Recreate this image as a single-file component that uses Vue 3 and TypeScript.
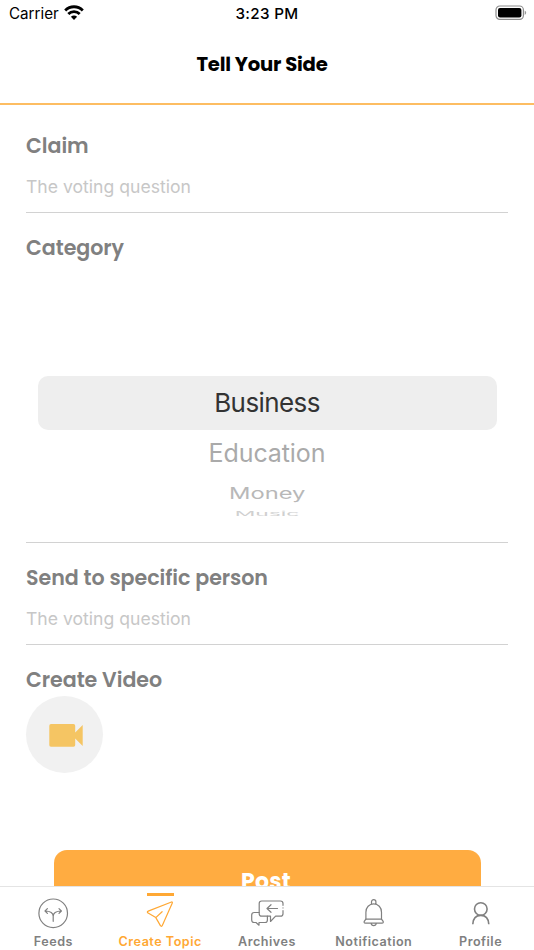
<script setup lang="ts">
interface Tab { label: string; icon: string; active?: boolean }
const tabs: Tab[] = [
  { label: 'Feeds', icon: 'feeds' },
  { label: 'Create Topic', icon: 'create', active: true },
  { label: 'Archives', icon: 'archives' },
  { label: 'Notification', icon: 'bell' },
  { label: 'Profile', icon: 'profile' },
]
</script>

<template>
  <div class="screen">
    <div class="status">
      <div class="carrier">
        <span>Carrier</span>
        <svg width="20" height="15" viewBox="0 0 20 15" fill="none" stroke="#000" stroke-width="2.8">
          <path d="M1.2 5.4C6.2.5 13.8.5 18.8 5.4M4.3 9c3.2-3.2 8.2-3.2 11.4 0" />
          <path d="M10 15 6.9 11.8c1.8-1.6 4.4-1.6 6.2 0Z" fill="#000" stroke="none" />
        </svg>
      </div>
      <span class="time">3:23 PM</span>
      <svg class="battery" width="32" height="16" viewBox="0 0 32 16">
        <rect x="1" y="1" width="27.4" height="13.4" rx="3.8" fill="none" stroke="#8d8d8d" stroke-width="1.2" />
        <rect x="3" y="3" width="23.4" height="9.4" rx="2" />
        <path d="M29.7 5.5c2 .8 2 3.6 0 4.4Z" fill="#999" />
      </svg>
    </div>
    <header><h1>Tell Your Side</h1></header>
    <main>
      <section class="field">
        <h2>Claim</h2>
        <p>The voting question</p>
      </section>
      <section class="category">
        <h2>Category</h2>
        <div class="wheel">
          <div class="selected"><span>Business</span></div>
          <div class="row education"><span>Education</span></div>
          <div class="row money"><span>Money</span></div>
          <div class="row music"><span>Music</span></div>
        </div>
      </section>
      <section class="field">
        <h2>Send to specific person</h2>
        <p>The voting question</p>
      </section>
      <section class="video">
        <h2>Create Video</h2>
        <button class="record" aria-label="Record video">
          <svg width="34" height="23" viewBox="0 0 34 23" fill="#f5c563"><path d="M2 0h22.5a1.7 1.7 0 0 1 1.7 1.7v6.7L33.7 1v21l-7.5-7.4v6.5a1.7 1.7 0 0 1-1.7 1.7H2A1.7 1.7 0 0 1 .3 21V1.7A1.7 1.7 0 0 1 2 0Z" /></svg>
        </button>
      </section>
      <button class="post"><span>Post</span></button>
    </main>
    <nav>
      <div v-for="tab in tabs" :key="tab.icon" class="tab" :class="{ active: tab.active }">
        <i class="marker"></i>
        <svg width="40" height="32" viewBox="0 0 40 32" fill="none" stroke="currentColor" stroke-width="1.2" stroke-linecap="round" stroke-linejoin="round">
          <g v-if="tab.icon === 'feeds'">
            <circle cx="20.2" cy="16.3" r="14.3" /><path d="M20.2 24.3v-5c0-3-2.5-5.3-8-5.3M20.2 19.3c0-3 2.5-5.3 8-5.3M14.4 11.6 12 14l2.4 2.4M26 11.6l2.4 2.4-2.4 2.4" />
          </g>
          <path v-else-if="tab.icon === 'create'" d="M31.5 5 8.2 14.1c-1.1.4-1.1 1.4-.1 2l7.7 4.5 4.6 8c.5 1 1.5.9 1.9-.1L32.3 6c.3-.7-.1-1.2-.8-1ZM15.8 20.6l6.3-5.9" />
          <g v-else-if="tab.icon === 'archives'">
            <path d="M36 8.3V6.5q0-2.5-2.5-2.5H14.7q-2.5 0-2.5 2.5v10.2q0 2.5 2.5 2.5h8.8v5.3l5.1-5.3h4.9q2.5 0 2.5-2.5v-3.2" />
            <path d="M36 10.9v.1M30.5 11.5H20M24 7.7l-4 3.8 4 3.8" />
            <path d="M12.2 15.5H7.2q-2.5 0-2.5 2.5v5q0 2.5 2.5 2.5H9l3 2.7v-2.7h6.2q2.2 0 2.2-2.5v-3.8" />
          </g>
          <g v-else-if="tab.icon === 'bell'">
            <path d="M17.5 7.2V4.8c0-3 4.4-3 4.4 0v2.4M11.9 22.2v-7c0-4.8 3.3-8.3 7.8-8.3s7.8 3.5 7.8 8.3v7" />
            <path d="M11.9 22.2h15.6c.8 1.2 2.2 2 1.8 3.1-.2.7-.8.8-1.5.8H11.6c-.7 0-1.3-.1-1.5-.8-.4-1.1 1-1.9 1.8-3.1ZM17 26.2c.6 3.3 4.8 3.3 5.4 0" />
          </g>
          <g v-else stroke-width="1.6" stroke-linecap="butt">
            <circle cx="19.8" cy="12" r="6.3" /><path d="M11.8 27.2c.3-5.5 3.3-8.8 8-8.8s7.7 3.3 8 8.8" />
          </g>
        </svg>
        <span>{{ tab.label }}</span>
      </div>
    </nav>
  </div>
</template>

<style>
body { margin: 0; }
</style>
<style scoped>
* { box-sizing: border-box; }
.screen { width: 534px; height: 950px; overflow: hidden; display: flex; flex-direction: column; background: #fff; font-family: Inter, "Liberation Sans", sans-serif; }
.status { height: 27px; flex: none; display: grid; grid-template-columns: 1fr auto 1fr; align-items: center; padding: 0 7px 0 9px; line-height: 27px; }
.carrier { display: flex; align-items: center; gap: 5px; font-size: 15.2px; }
.carrier svg { margin-top: -2px; }
.time { font-size: 15.2px; font-weight: 500; letter-spacing: .35px; padding-right: 2px; }
.battery { justify-self: end; margin-top: -1px; }
header { height: 78px; flex: none; border-bottom: 2px solid #fdbd62; display: flex; justify-content: center; padding: 22px 10px 0 0; }
h1, h2, p { margin: 0; }
h1 { font: 700 19.6px/30px Poppins, Inter, sans-serif; letter-spacing: -.2px; }
main { flex: 1; min-height: 0; overflow: hidden; padding: 0 26px; }
h2 { font: 600 20.6px/32px Poppins, Inter, sans-serif; letter-spacing: -.04px; color: #808080; white-space: nowrap; }
.field { height: 108px; padding-top: 25px; border-bottom: 1px solid #d2d2d2; }
.field p { font-size: 17.6px; line-height: 24px; margin-top: 13px; color: #c7c7c7; }
.category { height: 330px; padding-top: 19px; border-bottom: 1px solid #d2d2d2; }
.category + .field { height: 102px; padding-top: 19px; }
.wheel { padding: 112px 11.5px 0; text-align: center; }
.selected { height: 54px; border-radius: 10px; background: #eee; color: #333; font-size: 26px; line-height: 54px; letter-spacing: -.6px; }
.row span { display: inline-block; }
.education { height: 46px; line-height: 47px; font-size: 25px; color: #aaa; letter-spacing: -.1px; }
.money { height: 34px; line-height: 34px; font-size: 25px; color: #b8b8b8; }
.money span { transform: scale(.95, .62); }
.music { height: 8px; line-height: 8px; font-size: 24px; color: #d0d0d0; }
.music span { transform: scale(.95, .25); }
.video { padding-top: 19px; }
button { border: 0; padding: 0; }
.record { width: 77px; height: 77px; margin-top: -.5px; border-radius: 50%; background: #f1f1f1; display: flex; align-items: center; justify-content: center; }
.record svg { display: block; margin: 3px 0 0 3px; }
.post { display: block; width: 427px; height: 64px; margin: 77.5px 0 0 27.5px; border-radius: 13px; background: #ffac41; color: #fff; font: 700 22px/62px Poppins, Inter, sans-serif; letter-spacing: .3px; }
.post span { margin-right: 2px; }
nav { height: 64px; flex: none; border-top: 1px solid #e4e4e4; display: grid; grid-template-columns: repeat(5, 1fr); background: #fff; }
.tab { display: flex; flex-direction: column; align-items: center; color: #808080; padding-top: 6px; font-size: 12.6px; font-weight: 600; line-height: 18px; letter-spacing: .5px; white-space: nowrap; }
.marker { width: 27px; height: 3px; flex: none; }
.tab svg { margin-top: 1px; flex: none; }
.tab > span { margin-top: 4px; }
.active { color: #ffa834; }
.active .marker { background: currentColor; }
</style>
